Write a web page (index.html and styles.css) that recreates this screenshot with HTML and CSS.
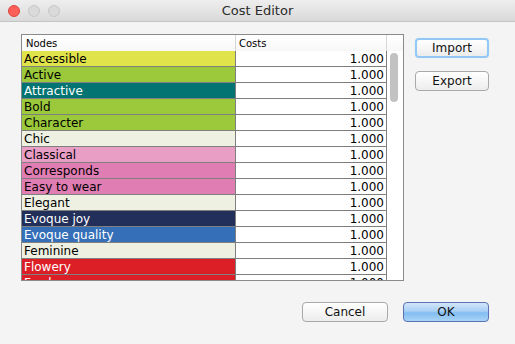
FILE: index.html
```html
<!DOCTYPE html>
<html>
<head>
<meta charset="utf-8">
<link rel="stylesheet" href="styles.css">
</head>
<body>
<div class="window">
  <div class="titlebar">
    <div class="lights">
      <span class="light close"></span>
      <span class="light"></span>
      <span class="light"></span>
    </div>
    <div class="title">Cost Editor</div>
  </div>
  <div class="main">
    <div class="scrollpane">
      <div class="viewport">
        <div class="thead">
          <div class="hcell nodes">Nodes</div>
          <div class="hcell costs">Costs</div>
        </div>
        <div class="row"><div class="cell nodes c-yellow">Accessible</div><div class="cell costs">1.000</div></div>
        <div class="row"><div class="cell nodes c-green">Active</div><div class="cell costs">1.000</div></div>
        <div class="row"><div class="cell nodes c-teal">Attractive</div><div class="cell costs">1.000</div></div>
        <div class="row"><div class="cell nodes c-green">Bold</div><div class="cell costs">1.000</div></div>
        <div class="row"><div class="cell nodes c-green">Character</div><div class="cell costs">1.000</div></div>
        <div class="row"><div class="cell nodes c-cream">Chic</div><div class="cell costs">1.000</div></div>
        <div class="row"><div class="cell nodes c-pink">Classical</div><div class="cell costs">1.000</div></div>
        <div class="row"><div class="cell nodes c-rose">Corresponds</div><div class="cell costs">1.000</div></div>
        <div class="row"><div class="cell nodes c-rose">Easy to wear</div><div class="cell costs">1.000</div></div>
        <div class="row"><div class="cell nodes c-cream">Elegant</div><div class="cell costs">1.000</div></div>
        <div class="row"><div class="cell nodes c-navy">Evoque joy</div><div class="cell costs">1.000</div></div>
        <div class="row"><div class="cell nodes c-blue">Evoque quality</div><div class="cell costs">1.000</div></div>
        <div class="row"><div class="cell nodes c-cream">Feminine</div><div class="cell costs">1.000</div></div>
        <div class="row"><div class="cell nodes c-red">Flowery</div><div class="cell costs">1.000</div></div>
        <div class="row"><div class="cell nodes c-red">Fresh</div><div class="cell costs">1.000</div></div>
      </div>
      <div class="vscroll">
        <div class="corner"></div>
        <div class="track"><div class="thumb"></div></div>
      </div>
    </div>
    <div class="side">
      <button class="btn focus">Import</button>
      <button class="btn">Export</button>
    </div>
  </div>
  <div class="footer">
    <button class="btn wide">Cancel</button>
    <button class="btn wide default">OK</button>
  </div>
</div>
</body>
</html>
```

FILE: styles.css
```css
html, body {
  margin: 0;
  padding: 0;
}
body {
  width: 515px;
  height: 344px;
  overflow: hidden;
  background: #f3f4f3;
  font-family: "DejaVu Sans", sans-serif;
  color: #000;
}
.window {
  display: flex;
  flex-direction: column;
  height: 344px;
}
.titlebar {
  height: 22px;
  box-sizing: border-box;
  border-bottom: 1px solid #c4c4c4;
  background: linear-gradient(#eeeeee, #e2e2e2 60%, #d9d9d9);
  display: flex;
  align-items: center;
  position: relative;
}
.lights {
  display: flex;
  gap: 8px;
  padding-left: 8px;
}
.light {
  width: 12px;
  height: 12px;
  border-radius: 50%;
  background: #dadada;
  border: 1px solid #c6c6c6;
  box-sizing: border-box;
}
.light.close {
  background: #fc5f57;
  border-color: #e0443e;
}
.title {
  position: absolute;
  left: 0;
  right: 0;
  top: 0;
  text-align: center;
  font-size: 13px;
  line-height: 22px;
  color: #2b2b2b;
}
.main {
  display: flex;
  align-items: flex-start;
  padding: 12px 0 0 21px;
  gap: 11px;
}
.scrollpane {
  width: 383px;
  height: 247px;
  box-sizing: border-box;
  border: 1px solid #8a8a8a;
  background: #fff;
  display: flex;
  overflow: hidden;
}
.viewport {
  width: 365px;
  overflow: hidden;
}
.thead {
  display: flex;
  height: 16px;
  background: linear-gradient(#ffffff, #f7f7f7);
}
.hcell {
  font-size: 10px;
  line-height: 16px;
  padding-top: 1px;
  box-sizing: border-box;
  border-right: 1px solid #d6d6d6;
  white-space: nowrap;
}
.hcell.nodes {
  width: 214px;
  padding-left: 4px;
}
.hcell.costs {
  width: 151px;
  padding-left: 3px;
}
.row {
  display: flex;
  height: 16px;
}
.cell {
  height: 16px;
  box-sizing: border-box;
  border-right: 1px solid #7f7f7f;
  border-bottom: 1px solid #7f7f7f;
  font-size: 12px;
  line-height: 17px;
  white-space: nowrap;
  overflow: visible;
}
.cell.nodes {
  width: 214px;
  padding-left: 2px;
}
.cell.costs {
  width: 151px;
  text-align: right;
  padding-right: 2px;
  background: #fff;
}
.c-yellow { background: #e1e34b; }
.c-green { background: #9cc93b; }
.c-teal { background: #037471; color: #fff; }
.c-cream { background: #eef0e1; }
.c-pink { background: #e99ec6; }
.c-rose { background: #e07db2; }
.c-navy { background: #222f5b; color: #fff; }
.c-blue { background: #356fb8; color: #fff; }
.c-red { background: #dc1f27; color: #fff; }
.vscroll {
  width: 16px;
  display: flex;
  flex-direction: column;
  background: #fff;
}
.corner {
  height: 16px;
  background: linear-gradient(#ffffff, #f7f7f7);
}
.track {
  flex: 1;
  padding: 2px 0 0 3px;
}
.thumb {
  width: 8px;
  height: 49px;
  border-radius: 4px;
  background: #c2c2c2;
}
.side {
  display: flex;
  flex-direction: column;
  gap: 13px;
  padding-top: 4px;
}
.btn {
  width: 74px;
  height: 20px;
  box-sizing: border-box;
  margin: 0;
  padding: 0;
  font-family: "DejaVu Sans", sans-serif;
  font-size: 12px;
  line-height: 18px;
  color: #111;
  border: 1px solid #a9a9a9;
  border-radius: 4px;
  background: linear-gradient(#ffffff, #f6f6f6 50%, #ececec);
}
.btn.focus {
  border: 2px solid #93c7f5;
  box-shadow: 0 0 1px 0 #b8dbf8;
  line-height: 16px;
}
.footer {
  display: flex;
  justify-content: flex-end;
  gap: 15px;
  padding: 21px 26px 0 0;
}
.btn.wide {
  width: 86px;
}
.btn.default {
  border-color: #5b73b2;
  background: linear-gradient(#d3e6fa, #a8d0f5 45%, #82bdf1 55%, #a9d4f7);
}
```
